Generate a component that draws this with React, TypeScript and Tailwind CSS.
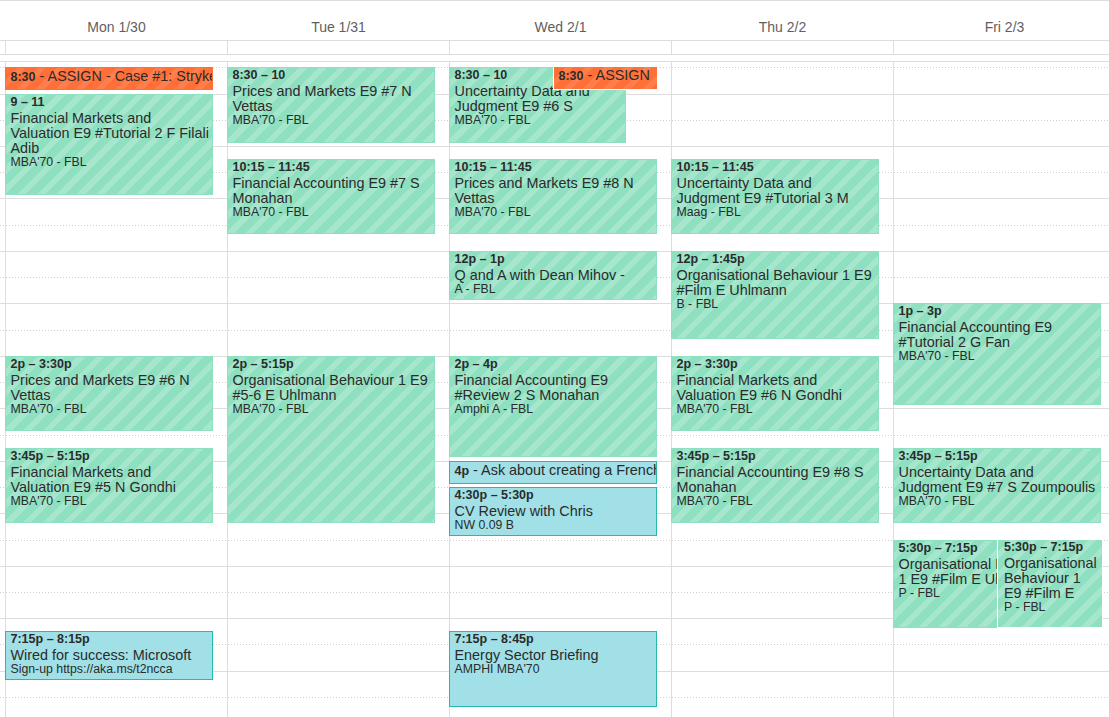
import clsx from "clsx";

type Kind = "green" | "orange" | "blue";

type CalEvent = {
  day: number;
  start: number;
  end: number;
  kind: Kind;
  time: string;
  title: string;
  loc?: string;
  inline?: boolean;
  left?: number;
  width?: number;
  ring?: boolean;
};

const SLOT = 26.24;
const t = (h: number, m = 0) => h * 60 + m;
// y inside the time grid, 8:30 line sits 5.3px under its top
const pos = (min: number) => 5.3 + ((min - 510) / 30) * SLOT;

const days = ["Mon 1/30", "Tue 1/31", "Wed 2/1", "Thu 2/2", "Fri 2/3"];

const events: CalEvent[] = [
  { day: 0, start: t(8, 30), end: t(9), kind: "orange", time: "8:30", title: "ASSIGN - Case #1: Stryker Corporation", inline: true },
  { day: 0, start: t(9), end: t(11), kind: "green", time: "9 – 11", title: "Financial Markets and Valuation E9 #Tutorial 2 F Filali Adib", loc: "MBA'70 - FBL" },
  { day: 0, start: t(14), end: t(15, 30), kind: "green", time: "2p – 3:30p", title: "Prices and Markets E9 #6 N Vettas", loc: "MBA'70 - FBL" },
  { day: 0, start: t(15, 45), end: t(17, 15), kind: "green", time: "3:45p – 5:15p", title: "Financial Markets and Valuation E9 #5 N Gondhi", loc: "MBA'70 - FBL" },
  { day: 0, start: t(19, 15), end: t(20, 15), kind: "blue", time: "7:15p – 8:15p", title: "Wired for success: Microsoft", loc: "Sign-up https://aka.ms/t2ncca" },

  { day: 1, start: t(8, 30), end: t(10), kind: "green", time: "8:30 – 10", title: "Prices and Markets E9 #7 N Vettas", loc: "MBA'70 - FBL" },
  { day: 1, start: t(10, 15), end: t(11, 45), kind: "green", time: "10:15 – 11:45", title: "Financial Accounting E9 #7 S Monahan", loc: "MBA'70 - FBL" },
  { day: 1, start: t(14), end: t(17, 15), kind: "green", time: "2p – 5:15p", title: "Organisational Behaviour 1 E9 #5-6 E Uhlmann", loc: "MBA'70 - FBL" },

  { day: 2, start: t(8, 30), end: t(10), kind: "green", time: "8:30 – 10", title: "Uncertainty Data and Judgment E9 #6 S", loc: "MBA'70 - FBL", width: 177 },
  { day: 2, start: t(8, 30), end: t(9), kind: "orange", time: "8:30", title: "ASSIGN", inline: true, left: 103, width: 105, ring: true },
  { day: 2, start: t(10, 15), end: t(11, 45), kind: "green", time: "10:15 – 11:45", title: "Prices and Markets E9 #8 N Vettas", loc: "MBA'70 - FBL" },
  { day: 2, start: t(12), end: t(13), kind: "green", time: "12p – 1p", title: "Q and A with Dean Mihov -", loc: "A - FBL" },
  { day: 2, start: t(14), end: t(16), kind: "green", time: "2p – 4p", title: "Financial Accounting E9 #Review 2 S Monahan", loc: "Amphi A - FBL" },
  { day: 2, start: t(16), end: t(16, 30), kind: "blue", time: "4p", title: "Ask about creating a French conversation group", inline: true },
  { day: 2, start: t(16, 30), end: t(17, 30), kind: "blue", time: "4:30p – 5:30p", title: "CV Review with Chris", loc: "NW 0.09 B" },
  { day: 2, start: t(19, 15), end: t(20, 45), kind: "blue", time: "7:15p – 8:45p", title: "Energy Sector Briefing", loc: "AMPHI MBA'70" },

  { day: 3, start: t(10, 15), end: t(11, 45), kind: "green", time: "10:15 – 11:45", title: "Uncertainty Data and Judgment E9 #Tutorial 3 M", loc: "Maag - FBL" },
  { day: 3, start: t(12), end: t(13, 45), kind: "green", time: "12p – 1:45p", title: "Organisational Behaviour 1 E9 #Film E Uhlmann", loc: "B - FBL" },
  { day: 3, start: t(14), end: t(15, 30), kind: "green", time: "2p – 3:30p", title: "Financial Markets and Valuation E9 #6 N Gondhi", loc: "MBA'70 - FBL" },
  { day: 3, start: t(15, 45), end: t(17, 15), kind: "green", time: "3:45p – 5:15p", title: "Financial Accounting E9 #8 S Monahan", loc: "MBA'70 - FBL" },

  { day: 4, start: t(13), end: t(15), kind: "green", time: "1p – 3p", title: "Financial Accounting E9 #Tutorial 2 G Fan", loc: "MBA'70 - FBL" },
  { day: 4, start: t(15, 45), end: t(17, 15), kind: "green", time: "3:45p – 5:15p", title: "Uncertainty Data and Judgment E9 #7 S Zoumpoulis", loc: "MBA'70 - FBL" },
  { day: 4, start: t(17, 30), end: t(19, 15), kind: "green", time: "5:30p – 7:15p", title: "Organisational Behaviour 1 E9 #Film E Uhlmann", loc: "P - FBL", width: 172 },
  { day: 4, start: t(17, 30), end: t(19, 15), kind: "green", time: "5:30p – 7:15p", title: "Organisational Behaviour 1 E9 #Film E", loc: "P - FBL", left: 103, width: 106, ring: true },
];

const kindClass: Record<Kind, string> = {
  green:
    "bg-[#8fe0c0] border-[#8fe0c0] bg-[repeating-linear-gradient(135deg,transparent_0_8px,rgba(255,255,255,0.2)_8px_14px)]",
  orange:
    "bg-[#ff7038] border-[#ff7038] bg-[repeating-linear-gradient(135deg,transparent_0_8px,rgba(255,255,255,0.1)_8px_14px)]",
  blue: "bg-[#a0e0e6] border-[#26b9b0]",
};

function EventBox({ ev }: { ev: CalEvent }) {
  const top = pos(ev.start) - (ev.ring ? 1 : 0);
  const height = pos(ev.end) - pos(ev.start) - 3.5 + (ev.ring ? 1 : 0);
  return (
    <div
      className={clsx(
        "absolute overflow-hidden border text-[#2b2b2b]",
        kindClass[ev.kind],
        ev.ring && "border-white"
      )}
      style={{ top, height, left: ev.left ?? -1, width: ev.width ?? 208 }}
    >
      {ev.inline ? (
        <div className="whitespace-nowrap pt-[1px] pl-[4.5px] text-[14.4px] leading-[15px]">
          <span className="text-[12.5px] font-bold">{ev.time}</span> - {ev.title}
        </div>
      ) : (
        <div className={ev.ring ? "pl-[6px] pr-[2px]" : "pl-[4.5px]"}>
          <div className="mb-[1px] whitespace-nowrap text-[12.5px] font-bold leading-[15px]">{ev.time}</div>
          <div className="text-[14.4px] leading-[15px]">{ev.title}</div>
          {ev.loc && <div className="text-[12.3px] leading-[12px]">{ev.loc}</div>}
        </div>
      )}
    </div>
  );
}

export default function App() {
  const rows = Array.from({ length: 26 }, (_, i) => i);

  return (
    <div className="h-[717px] w-[1109px] overflow-hidden bg-white font-['Liberation_Sans',Arial,sans-serif]">
      {/* day headings */}
      <div className="flex h-[41px] border-y border-[#ddd]">
        <div className="w-[5px] shrink-0" />
        {days.map((d) => (
          <div
            key={d}
            className="flex w-[222px] shrink-0 items-end justify-center border-l border-transparent pb-[5px] text-[14px] leading-[16px] text-[#5f5f5f]"
          >
            {d}
          </div>
        ))}
      </div>

      {/* all-day row */}
      <div className="flex h-[14px] border-b border-[#ddd]">
        <div className="w-[5px] shrink-0" />
        {days.map((d) => (
          <div key={d} className="w-[222px] shrink-0 border-l border-[#ddd]" />
        ))}
      </div>

      <div className="h-[7px] border-b border-[#ddd]" />

      {/* time grid */}
      <div className="relative h-[655px] overflow-hidden">
        <div className="h-[5.3px]" />
        {rows.map((i) => (
          <div key={i} className="h-[26.24px]">
            <div
              className={
                i % 2 === 0
                  ? "h-px bg-[repeating-linear-gradient(90deg,#cfcfcf_0_1px,transparent_1px_3px)]"
                  : "h-px bg-[#ddd]"
              }
            />
          </div>
        ))}

        <div className="absolute inset-0 flex">
          <div className="w-[5px] shrink-0" />
          {days.map((d, di) => (
            <div key={d} className="relative w-[222px] shrink-0 border-l border-[#ddd]">
              {events
                .filter((e) => e.day === di)
                .map((e, k) => (
                  <EventBox key={k} ev={e} />
                ))}
            </div>
          ))}
        </div>
      </div>
    </div>
  );
}
